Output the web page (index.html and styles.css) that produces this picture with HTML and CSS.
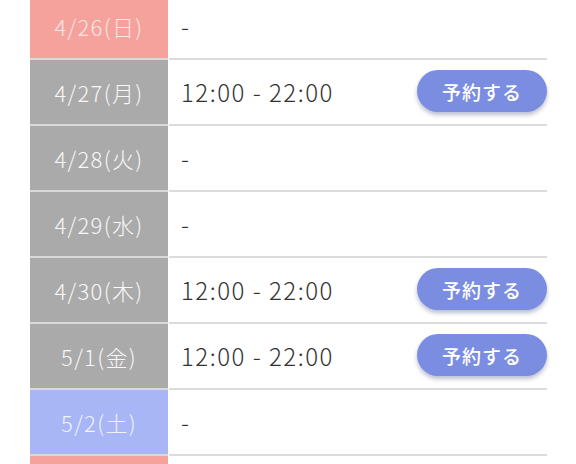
FILE: index.html
```html
<!DOCTYPE html>
<html lang="ja">
<head>
<meta charset="utf-8">
<link rel="stylesheet" href="styles.css">
</head>
<body>
<div class="schedule">
  <div class="row sun"><div class="date">4/26(日)</div><div class="slot"><span class="time">-</span></div></div>
  <div class="row"><div class="date">4/27(月)</div><div class="slot"><span class="time">12:00 - 22:00</span><button class="reserve">予約する</button></div></div>
  <div class="row"><div class="date">4/28(火)</div><div class="slot"><span class="time">-</span></div></div>
  <div class="row"><div class="date">4/29(水)</div><div class="slot"><span class="time">-</span></div></div>
  <div class="row"><div class="date">4/30(木)</div><div class="slot"><span class="time">12:00 - 22:00</span><button class="reserve">予約する</button></div></div>
  <div class="row"><div class="date">5/1(金)</div><div class="slot"><span class="time">12:00 - 22:00</span><button class="reserve">予約する</button></div></div>
  <div class="row sat"><div class="date">5/2(土)</div><div class="slot"><span class="time">-</span></div></div>
  <div class="row sun"><div class="date"></div><div class="slot"></div></div>
</div>
</body>
</html>
```
FILE: styles.css
```css
html, body {
  margin: 0;
  padding: 0;
  background: #ffffff;
  overflow: hidden;
  height: 464px;
}
body {
  font-family: "Noto Sans CJK JP", "Noto Sans", sans-serif;
}
.schedule {
  margin: -6px 29px 0 30px;
}
.row {
  display: grid;
  grid-template-columns: 139px 1fr;
  height: 66px;
}
.date {
  background: #aaaaaa;
  color: #f8f8f8;
  font-size: 22px;
  font-weight: 300;
  letter-spacing: 1.3px;
  display: flex;
  align-items: center;
  justify-content: center;
  border-bottom: 2px solid #d9d9d9;
  margin-right: 1px;
}
.sun .date { background: #f5a29d; color: #fce6e4; }
.sat .date { background: #a9b6f5; color: #f0f2fd; }
.slot {
  display: flex;
  align-items: center;
  justify-content: space-between;
  padding-left: 12px;
  border-bottom: 2px solid #dcdcdc;
}
.time {
  font-size: 24px;
  font-weight: 300;
  color: #333333;
  letter-spacing: 1.5px;
  margin-top: -1px;
}
.reserve {
  width: 130px;
  height: 42px;
  border: none;
  border-radius: 21px;
  background: #7b8de0;
  color: #ffffff;
  font-family: "Noto Sans CJK JP", sans-serif;
  font-size: 19px;
  font-weight: 500;
  letter-spacing: 1px;
  box-shadow: 0 3px 4px rgba(60, 70, 120, 0.35);
  margin-top: -2px;
  padding: 0;
}
```
